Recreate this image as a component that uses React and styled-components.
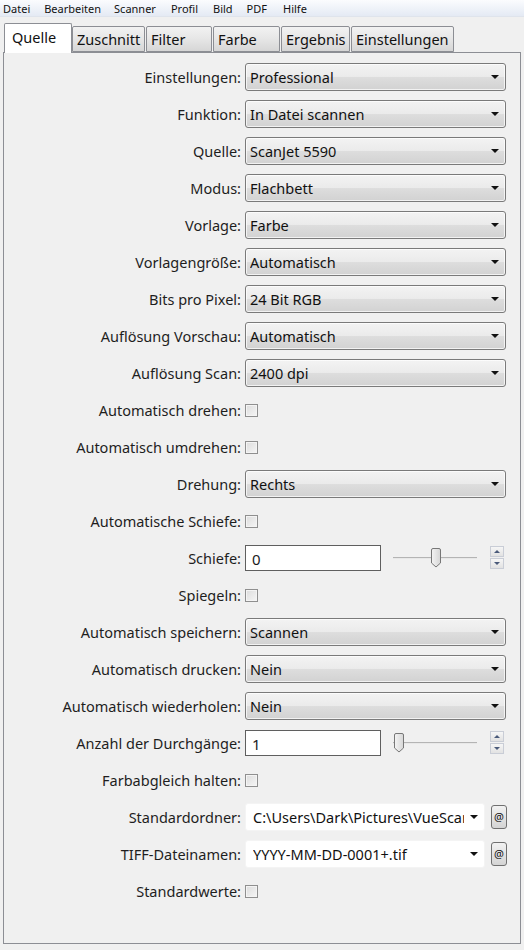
import React from "react";
import styled, { createGlobalStyle } from "styled-components";

const Global = createGlobalStyle`
  html, body { margin: 0; padding: 0; background: #f0f0f0; }
  body { font-family: "Noto Sans", "Open Sans", sans-serif; color: #1b1b1b; }
  * { box-sizing: border-box; }
`;

const Window = styled.div`
  width: 524px;
  height: 950px;
  background: #f0f0f0;
  overflow: hidden;
`;

const MenuBar = styled.div`
  height: 17px;
  display: flex;
  align-items: center;
  background: linear-gradient(#fbfcfe, #e4eaf4);
  border-bottom: 1px solid #dfe4ec;
  font-size: 11px;
  padding-left: 3px;
`;

const MenuItem = styled.span`
  margin-right: ${(p) => p.$gap}px;
  line-height: 17px;
  color: #111;
`;

const TabStrip = styled.div`
  display: flex;
  align-items: flex-end;
  height: 35px;
  padding-left: 4px;
  position: relative;
  z-index: 1;
`;

const Tab = styled.div`
  width: ${(p) => p.$w}px;
  height: ${(p) => (p.$active ? 30 : 26)}px;
  margin-right: ${(p) => p.$mr}px;
  margin-bottom: ${(p) => (p.$active ? -1 : 0)}px;
  border: 1px solid #8c8e94;
  border-bottom: ${(p) => (p.$active ? "none" : "1px solid #8c8e94")};
  background: ${(p) =>
    p.$active ? "#ffffff" : "linear-gradient(#f2f2f2 0%, #e6e6e6 50%, #d6d6d6 100%)"};
  border-radius: 2px 2px 0 0;
  font-size: 14.5px;
  line-height: ${(p) => (p.$active ? 27 : 24)}px;
  padding-left: ${(p) => (p.$active ? 7 : 4)}px;
  color: #111;
  white-space: nowrap;
  overflow: hidden;
`;

const Panel = styled.div`
  margin: 0 3px 0 3px;
  height: 892px;
  border: 1px solid #8c8e94;
  background: #f0f0f0;
  padding-top: 5px;
`;

const Row = styled.div`
  display: grid;
  grid-template-columns: 237px 1fr;
  column-gap: 4px;
  height: 37px;
  align-items: center;
`;

const Label = styled.div`
  text-align: right;
  font-size: 14.5px;
  color: #1e1e1e;
  white-space: nowrap;
`;

const Controls = styled.div`
  display: flex;
  align-items: center;
`;

const Select = styled.div`
  position: relative;
  width: ${(p) => p.$w || 261}px;
  height: 28px;
  border: 1px solid #7a7a7a;
  border-radius: 3px;
  background: ${(p) =>
    p.$white ? "#ffffff" : "linear-gradient(#f3f3f3 0%, #ebebeb 48%, #dddddd 52%, #d2d2d2 100%)"};
  border-color: ${(p) => (p.$white ? "#f4f4f4" : "#7a7a7a")};
  font-size: 14.5px;
  line-height: 26px;
  padding-left: ${(p) => (p.$white ? 7 : 4)}px;
  color: #111;
  white-space: nowrap;
  box-shadow: ${(p) => (p.$white ? "none" : "inset 0 0 0 1px rgba(255,255,255,0.7)")};
`;

const Caret = styled.span`
  position: absolute;
  right: 6px;
  top: 11px;
  width: 0;
  height: 0;
  border-left: 4px solid transparent;
  border-right: 4px solid transparent;
  border-top: 4px solid #111;
`;

const TextWrap = styled.div`
  width: calc(100% - 20px);
  overflow: hidden;
`;

const Check = styled.span`
  display: inline-block;
  width: 13px;
  height: 13px;
  border: 1px solid #8f8f8f;
  background: linear-gradient(135deg, #dcdcdc, #f6f6f6);
  box-shadow: inset 0 0 0 1px #f4f4f4;
  margin-top: 1px;
`;

const Input = styled.div`
  width: 136px;
  height: 26px;
  background: #ffffff;
  border: 1px solid #5f5f5f;
  font-size: 15px;
  line-height: 26px;
  padding-left: 6px;
`;

const Slider = styled.div`
  position: relative;
  width: 84px;
  height: 20px;
  margin-left: 12px;
`;

const Track = styled.div`
  position: absolute;
  left: 0;
  right: 0;
  top: 9px;
  height: 2px;
  border-top: 1px solid #b4b4b4;
  border-bottom: 1px solid #e8e8e8;
`;

const Thumb = styled.svg`
  position: absolute;
  top: 0;
`;

const Spinner = styled.div`
  margin-left: 13px;
  width: 14px;
  height: 23px;
  display: flex;
  flex-direction: column;
  gap: 1px;
`;

const SpinBtn = styled.div`
  flex: 1;
  border: 1px solid #c9cdd6;
  background: linear-gradient(#f6f6f6, #e2e2e2);
  display: flex;
  align-items: center;
  justify-content: center;
`;

const Tri = styled.span`
  width: 0;
  height: 0;
  border-left: 3px solid transparent;
  border-right: 3px solid transparent;
  ${(p) => (p.$up ? "border-bottom: 3px solid #4a5a7a;" : "border-top: 3px solid #4a5a7a;")}
`;

const AtButton = styled.div`
  margin-left: 6px;
  width: 16px;
  height: 24px;
  border: 1px solid #707070;
  border-radius: 3px;
  background: linear-gradient(#f2f2f2, #d4d4d4);
  font-size: 11px;
  line-height: 22px;
  text-align: center;
  color: #111;
`;

const SelectBox = ({ value, w, white }) => (
  <Select $w={w} $white={white}>
    <TextWrap>{value}</TextWrap>
    <Caret />
  </Select>
);

const SliderCtl = ({ pos }) => (
  <>
    <Slider>
      <Track />
      <Thumb style={{ left: pos }} width="12" height="20" viewBox="0 0 12 20">
        <defs>
          <linearGradient id="tg" x1="0" x2="1" y1="0" y2="0">
            <stop offset="0" stopColor="#f4f4f4" />
            <stop offset="1" stopColor="#d6d6d6" />
          </linearGradient>
        </defs>
        <path d="M1.5 2 Q1.5 0.5 3 0.5 H9 Q10.5 0.5 10.5 2 V15 L6 19 L1.5 15 Z" fill="url(#tg)" stroke="#777" strokeWidth="1" />
      </Thumb>
    </Slider>
    <Spinner>
      <SpinBtn><Tri $up /></SpinBtn>
      <SpinBtn><Tri /></SpinBtn>
    </Spinner>
  </>
);

const rows = [
  ["Einstellungen:", "select", "Professional"],
  ["Funktion:", "select", "In Datei scannen"],
  ["Quelle:", "select", "ScanJet 5590"],
  ["Modus:", "select", "Flachbett"],
  ["Vorlage:", "select", "Farbe"],
  ["Vorlagengröße:", "select", "Automatisch"],
  ["Bits pro Pixel:", "select", "24 Bit RGB"],
  ["Auflösung Vorschau:", "select", "Automatisch"],
  ["Auflösung Scan:", "select", "2400 dpi"],
  ["Automatisch drehen:", "check"],
  ["Automatisch umdrehen:", "check"],
  ["Drehung:", "select", "Rechts"],
  ["Automatische Schiefe:", "check"],
  ["Schiefe:", "slider", "0", 37],
  ["Spiegeln:", "check"],
  ["Automatisch speichern:", "select", "Scannen"],
  ["Automatisch drucken:", "select", "Nein"],
  ["Automatisch wiederholen:", "select", "Nein"],
  ["Anzahl der Durchgänge:", "slider", "1", 0],
  ["Farbabgleich halten:", "check"],
  ["Standardordner:", "combo", "C:\\Users\\Dark\\Pictures\\VueScan"],
  ["TIFF-Dateinamen:", "combo", "YYYY-MM-DD-0001+.tif"],
  ["Standardwerte:", "check"],
];

const menu = [
  ["Datei", 14],
  ["Bearbeiten", 13],
  ["Scanner", 15],
  ["Profil", 15],
  ["Bild", 14],
  ["PDF", 16],
  ["Hilfe", 0],
];

const tabs = [
  ["Quelle", 68, 0, true],
  ["Zuschnitt", 73, 1],
  ["Filter", 66, 1],
  ["Farbe", 67, 1],
  ["Ergebnis", 69, 1],
  ["Einstellungen", 103, 0],
];

export default function App() {
  return (
    <Window>
      <Global />
      <MenuBar>
        {menu.map(([t, g]) => (
          <MenuItem key={t} $gap={g}>{t}</MenuItem>
        ))}
      </MenuBar>
      <TabStrip>
        {tabs.map(([t, w, mr, a]) => (
          <Tab key={t} $w={w} $mr={mr} $active={a}>{t}</Tab>
        ))}
      </TabStrip>
      <Panel>
        {rows.map(([label, kind, value, pos]) => (
          <Row key={label}>
            <Label>{label}</Label>
            <Controls>
              {kind === "select" && <SelectBox value={value} />}
              {kind === "check" && <Check />}
              {kind === "slider" && (
                <>
                  <Input>{value}</Input>
                  <SliderCtl pos={pos} />
                </>
              )}
              {kind === "combo" && (
                <>
                  <SelectBox value={value} w={240} white />
                  <AtButton>@</AtButton>
                </>
              )}
            </Controls>
          </Row>
        ))}
      </Panel>
    </Window>
  );
}
